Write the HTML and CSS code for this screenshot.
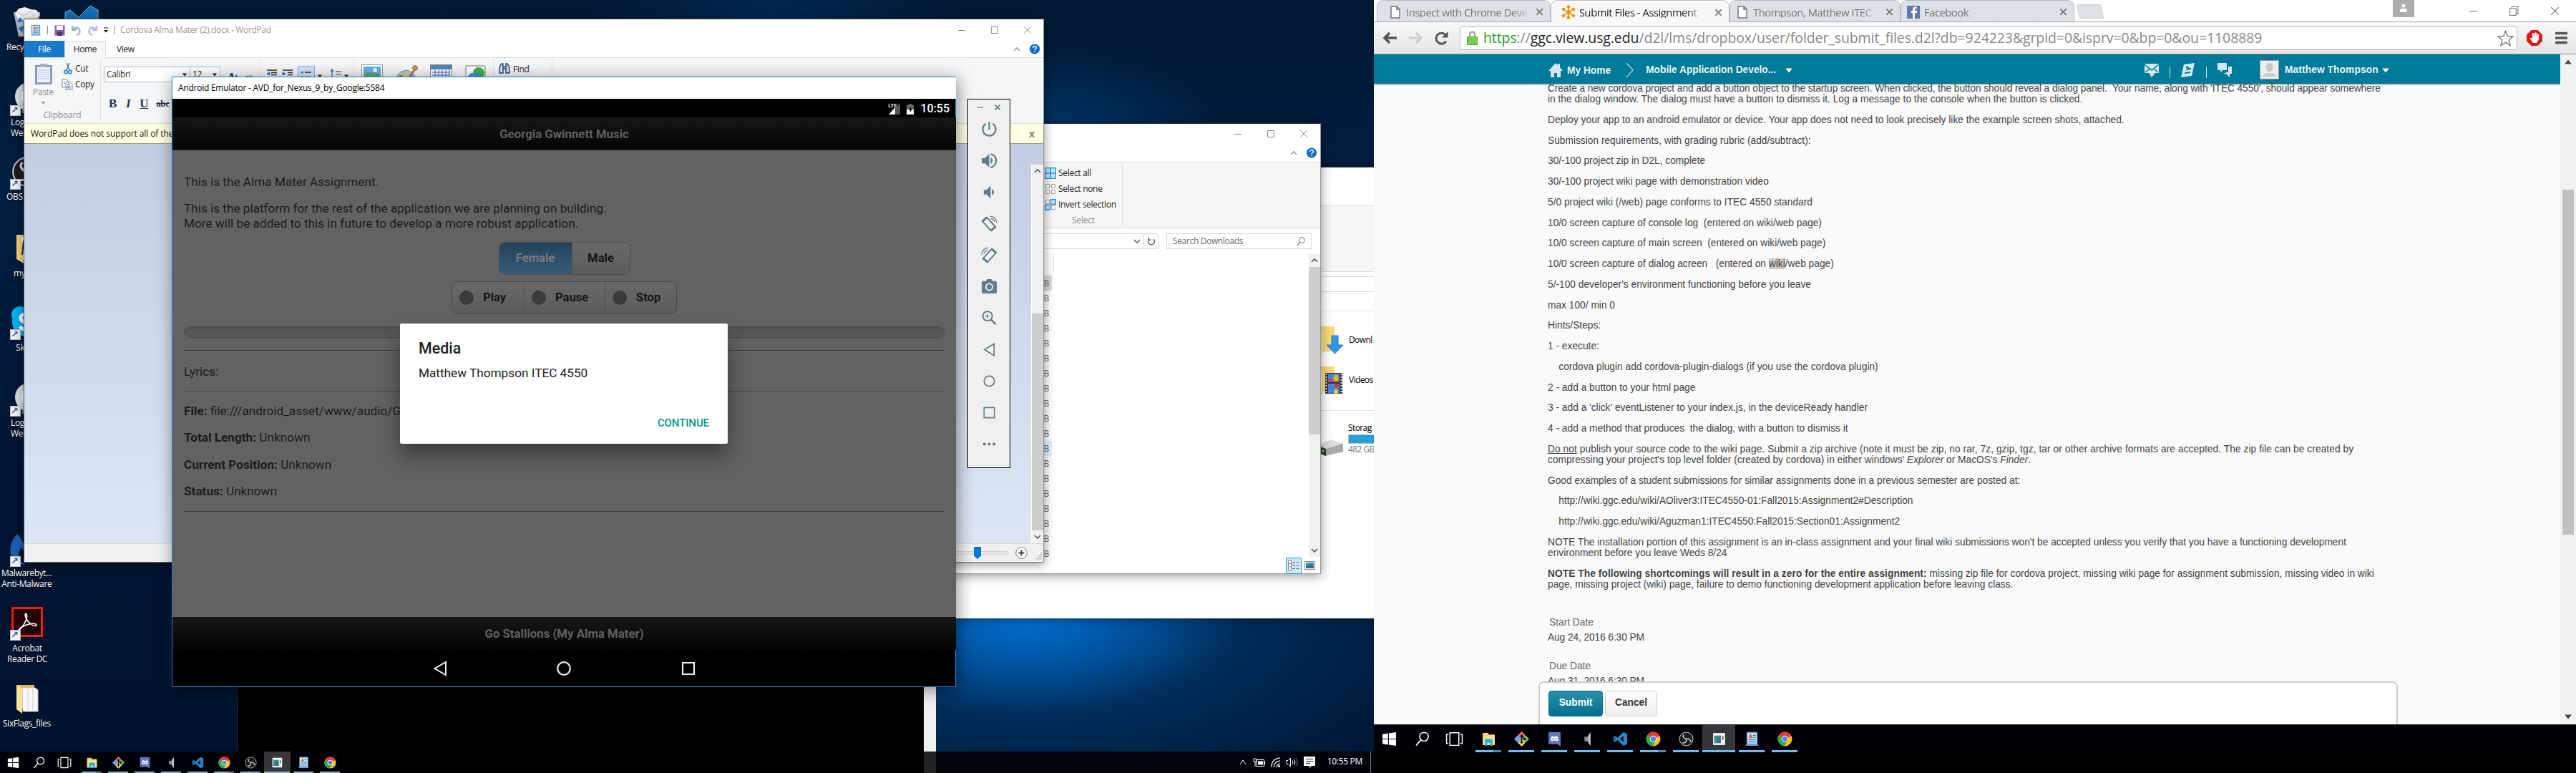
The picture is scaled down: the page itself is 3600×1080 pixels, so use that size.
FILE: index.html
```html
<!DOCTYPE html>
<html lang="en">
<head>
<meta charset="utf-8">
<title>Desktop</title>
<link rel="stylesheet" href="styles.css">
</head>
<body>
<svg class="defs" width="0" height="0">
  <symbol id="min" viewBox="0 0 12 12"><path d="M1 6.500h10" stroke="currentColor" fill="none"/></symbol>
  <symbol id="max" viewBox="0 0 12 12"><path d="M1.500 1.500h9v9h-9z" stroke="currentColor" fill="none"/></symbol>
  <symbol id="close" viewBox="0 0 12 12"><path d="M1 1l10 10M11 1L1 11" stroke="currentColor" fill="none"/></symbol>
  <symbol id="tabx" viewBox="0 0 12 12"><path d="M1.500 1.500l9 9M10.500 1.500l-9 9" stroke="currentColor" stroke-width="2" fill="none"/></symbol>
  <symbol id="up" viewBox="0 0 10 10"><path d="M1 7l4-4 4 4" stroke="currentColor" stroke-width="1.600" fill="none"/></symbol>
  <symbol id="down" viewBox="0 0 10 10"><path d="M1 3l4 4 4-4" stroke="currentColor" stroke-width="1.600" fill="none"/></symbol>
  <symbol id="caret" viewBox="0 0 10 10"><path d="M1 3h8L5 8z" fill="currentColor"/></symbol>
  <symbol id="help" viewBox="0 0 16 16"><circle cx="8" cy="8" r="7.600" fill="#0a6fd0"/><path d="M5.600 6.200c0-3.200 4.900-3 4.900-.2 0 1.700-2.300 1.800-2.300 3.700M8.200 11v1.700" stroke="#fff" stroke-width="1.600" fill="none"/></symbol>
  <symbol id="win" viewBox="0 0 20 20"><path d="M1 3.500l7.500-1v7H1zM9.500 2.300L19 1v8.500H9.500zM1 10.500h7.500v7l-7.500-1zM9.500 10.500H19V19l-9.500-1.300z" fill="#fff"/></symbol>
  <symbol id="search" viewBox="0 0 20 20"><circle cx="12.500" cy="7" r="5.800" stroke="currentColor" stroke-width="1.500" fill="none"/><path d="M8.300 11.200L2 18.500" stroke="currentColor" stroke-width="1.700"/></symbol>
  <symbol id="task" viewBox="0 0 24 20"><path d="M6 1.500h12v17H6zM4 4H1.500v12H4M20 4h2.500v12H20" stroke="#fff" stroke-width="1.400" fill="none"/></symbol>
  <symbol id="folder" viewBox="0 0 20 20"><path d="M2 2h7l1 2h8v14H2z" fill="#f7d36b"/><path d="M2 6h16v12H2z" fill="#fbe08a"/><path d="M5 19v-7q0-2 2-2h6q2 0 2 2v7h-3v-4H8v4z" fill="#22aef0"/></symbol>
  <symbol id="git" viewBox="0 0 20 20"><path d="M10 0l5 5-5 5-5-5z" fill="#f06d6d"/><path d="M5 5l5 5-5 5-5-5z" fill="#6fa5f0"/><path d="M15 5l5 5-5 5-5-5z" fill="#7bc45a"/><path d="M10 10l5 5-5 5-5-5z" fill="#f3da68"/><path d="M10 4v12M10 6l4 4" stroke="#111" stroke-width="1.300"/><circle cx="10" cy="6" r="1.500"/><circle cx="14" cy="10" r="1.500"/><circle cx="10" cy="14" r="1.500"/></symbol>
  <symbol id="discord" viewBox="0 0 20 20"><path d="M3 1h14q1 0 1 1v18l-4-3H3q-1 0-1-1V2q0-1 1-1z" fill="#6276bd"/><path d="M5 12q0-5 2-6l2 1h2l2-1q2 1 2 6l-2.500 1-1-1h-3l-1 1z" fill="#fff"/><circle cx="8" cy="10" r="1.100" fill="#6276bd"/><circle cx="12" cy="10" r="1.100" fill="#6276bd"/></symbol>
  <symbol id="spk" viewBox="0 0 20 20"><path d="M6 7h4l4-6v18l-4-6H6z" fill="#8d8d8d"/><path d="M11 6l3-5v18l-3-5z" fill="#c5c5c5"/></symbol>
  <symbol id="vs" viewBox="0 0 20 20"><path d="M14 1l5 2v14l-5 2-8-7.500L3 14l-2-1V7l2-1 3 2.500zM14 6l-4.500 4 4.500 4zM2.500 8.500v3L4 10z" fill="#2489ca" fill-rule="evenodd"/></symbol>
  <symbol id="chrome" viewBox="0 0 20 20"><circle cx="10" cy="10" r="9.500" fill="#fbc116"/><path d="M10 10L1.800 5.200A9.500 9.500 0 0 1 18.500 6z" fill="#e33b2e"/><path d="M10 10L1.800 5.200A9.500 9.500 0 0 0 9 19.500l4.500-7.500z" fill="#2da94f"/><circle cx="10" cy="10" r="4.500" fill="#fff"/><circle cx="10" cy="10" r="3.500" fill="#4688f4"/></symbol>
  <symbol id="obs" viewBox="0 0 20 20"><circle cx="10" cy="10" r="9" fill="#1d1b1e" stroke="#bbb"/><path d="M10 10c-4-1-5-4-3-6M10 10c4-1 6 1 6 4M10 10c1 4-2 6-5 5" stroke="#cfcfcf" stroke-width="1.500" fill="none"/></symbol>
  <symbol id="emu" viewBox="0 0 20 20"><path d="M2 2h16v16H2z" fill="#f3f3f3"/><path d="M3.500 5.500h9v10h-9z" fill="#3f9178"/><path d="M8 8h4v7H6z" fill="#3a6dad"/><path d="M14 6h2v5h-2z" fill="#777"/></symbol>
  <symbol id="wp" viewBox="0 0 20 20"><path d="M3 1h14v16H3z" fill="#cfe6fa" stroke="#2c6fae"/><path d="M2 17h16v2H2z" fill="#79a5cc"/><path d="M6 9l2-5 2 5M6.500 7.500h3" stroke="#e2601f" stroke-width="1.500" fill="none"/><path d="M11 5h4M11 8h4M5 11h10M5 14h10" stroke="#2e7fc6" stroke-width="1.200"/></symbol>
  <symbol id="page" viewBox="0 0 14 18"><path d="M1 1h8l4 4v12H1zM9 1v4h4" fill="#fff" stroke="#777" stroke-width="1.500"/></symbol>
  <symbol id="rot" viewBox="0 0 24 24"><path d="M8.500 3L21 16.500l-6.500 5.500L2 8.500z" fill="none" stroke="#607d8b" stroke-width="2"/><path d="M2 8.500l6.500-5.500M14.500 22l6.500-5.500" stroke="#607d8b" stroke-width="3.200"/><path d="M13 1.200q9 .3 10 10M14 4.500q4 .5 6 5" fill="none" stroke="#607d8b" stroke-width="1.300"/></symbol>
  <symbol id="logi" viewBox="0 0 44 44"><circle cx="22" cy="20" r="20" fill="#d9dcdd"/><circle cx="24" cy="20" r="13" fill="#fff"/><circle cx="26" cy="20" r="10" fill="#222"/><circle cx="27" cy="20" r="7" fill="#2e8c95"/><path d="M12 38h20v5H12z" fill="#8a8a8a"/></symbol>
</svg>

<main class="stage">
<section class="desktop">
  <div class="dicon recycle"><svg width="40" height="44" viewBox="0 0 40 44"><path d="M1 8l37 0-5 34H8z" fill="#cfd6dc" opacity=".85"/><path d="M3 10l5-7 9-2 8 3 8 1 5 7-8 8H9z" fill="#f0f0ee"/><path d="M8 9l7 4 8-6 7 6" stroke="#bbb" fill="none"/><path d="M5 22l5-7 5 6zM16 27l-3 9-6-6z" fill="#1b76cf"/></svg><p>Recy</p></div>
  <div class="dicon vstudio"><svg width="48" height="30" viewBox="0 0 48 30"><path d="M1 10l7-3 12 10L36 1l11 6v23H1z" fill="#1073b8" stroke="#8aa9c4"/></svg></div>
  <div class="dicon d-logi"><svg width="44" height="44"><use href="#logi"/></svg><p>Log<br>Wel</p></div>
  <div class="dicon d-obs"><svg width="44" height="44" viewBox="0 0 20 20"><use href="#obs"/></svg><p>OBS S</p></div>
  <div class="dicon d-my"><svg width="32" height="42" viewBox="0 0 32 42"><path d="M1 1h16v34l-6 6L1 35z" fill="#f3d27a"/><path d="M8 4h20v32H10z" fill="#fff"/><path d="M11 9l-2 20" stroke="#333" stroke-width="2"/></svg><p>my</p></div>
  <div class="dicon d-skype"><svg width="44" height="44" viewBox="0 0 44 44"><circle cx="13" cy="12" r="12" fill="#00aff0"/><circle cx="22" cy="22" r="20" fill="#00aff0"/><circle cx="31" cy="32" r="12" fill="#00aff0"/><path d="M31 14c-5-6-18-4-17 3 1 8 17 4 17 11 0 6-14 7-18 0" stroke="#fff" stroke-width="5" fill="none"/></svg><p>Sk</p></div>
  <div class="dicon d-logi2"><svg width="44" height="44"><use href="#logi"/></svg><p>Log<br>Wel</p></div>
  <div class="dicon d-mal"><svg width="44" height="44" viewBox="0 0 44 44"><path d="M10 1C-2 14-3 30 8 40c3 2 8 4 14 4-12-5-12-17-6-24 2 3 4 5 6 6C21 17 17 8 10 1z" fill="#1c5fae"/></svg><p>Malwarebyt...<br>Anti-Malware</p></div>
  <div class="dicon d-acro"><svg width="44" height="42" viewBox="0 0 44 42"><path d="M1.500 1.500h41v39h-41z" fill="#250305" stroke="#f21c0a" stroke-width="3"/><path d="M9 33c6-2 15-18 12-23-3-3-3 6 5 13 6 5 11 4 8 1-4-2-19 1-24 8-2 3 1 3 3 0" fill="none" stroke="#fff" stroke-width="1.600"/></svg><p>Acrobat<br>Reader DC</p></div>
  <div class="dicon d-six"><svg width="32" height="42" viewBox="0 0 32 42"><path d="M1 1h25v34H1z" fill="#e6b84d"/><path d="M9 5h18l4 3v30H10z" fill="#f8f8f8" stroke="#c9c9c9"/><path d="M17 7v32M24 6v32" stroke="#ccc"/><path d="M1 1l8 5v35L1 35z" fill="#fbe196"/></svg><p>SixFlags_files</p></div>

  <div class="console"><div class="console-bar"></div></div>

  <div class="pc">
    <div class="pc-top"></div><div class="pc-ribbon"></div><div class="pc-addr"><i></i></div><div class="pc-head"></div>
    <div class="pc-row r1"><svg width="34" height="42" viewBox="0 0 34 42"><path d="M0 0h20v35H0z" fill="#fbd976"/><path d="M0 4q3 0 4 5v26l-2 5H0z" fill="#f7e6ac"/><path d="M16 13h9v13h7L20.500 38 9 26h7z" fill="#2f96ea" stroke="#1c78c4"/></svg><span>Downl</span></div>
    <div class="pc-row r2"><svg width="34" height="42" viewBox="0 0 34 42"><path d="M0 0h20v35H0z" fill="#fbd976"/><path d="M0 4q3 0 4 5v26l-2 5H0z" fill="#f7e6ac"/><path d="M7 9h24v29H7z" fill="#333"/><path d="M8.500 10v28M29.500 10v28" stroke="#ddd" stroke-width="2" stroke-dasharray="2 2"/><path d="M11 10h16v12H11zM11 24h16v13H11z" fill="#4583dc"/><path d="M11 19q6-3 16 3H11z" fill="#c54867"/><ellipse cx="22" cy="16" rx="3.500" ry="4.500" fill="#e8b91d"/><ellipse cx="23" cy="27" rx="3" ry="3" fill="#d23b20"/><circle cx="22" cy="35" r="3" fill="#e8c91d"/></svg><span>Videos</span></div>
    <div class="pc-row r3"><svg width="34" height="30" viewBox="0 0 34 30"><path d="M0 8L15 1l17 6v11L7 24 0 21z" fill="#dcdcde"/><path d="M8 14l24-7v11L7 24z" fill="#a9aaac"/><path d="M0 11l8 3v10l-8-3z" fill="#333"/><circle cx="4" cy="17" r="2" fill="#38d13b"/></svg><div><span>Storag</span><b></b><em>482 GB</em></div></div>
  </div>

  <div class="explorer">
    <div class="caps"><svg><use href="#min"/></svg><svg><use href="#max"/></svg><svg><use href="#close"/></svg></div>
    <div class="tabs-r"><svg class="s10"><use href="#up"/></svg><svg class="s16"><use href="#help"/></svg></div>
    <div class="ex-ribbon">
      <div class="selbox">
        <p><svg width="16" height="16" viewBox="0 0 16 16"><path d="M.5.500h15v15H.5zM8 1v14M1 8h14" fill="#bfe3fa" stroke="#2e94e0" stroke-width="1.600"/></svg>Select all</p>
        <p><svg width="16" height="16" viewBox="0 0 16 16"><path d="M1.500 1.500h5v5h-5zM9.500 1.500h5v5h-5zM1.500 9.500h5v5h-5zM9.500 9.500h5v5h-5z" fill="#fff" stroke="#a5a5a5"/></svg>Select none</p>
        <p><svg width="16" height="16" viewBox="0 0 16 16"><path d="M1.500 1.500h5v5h-5zM9.500 9.500h5v5h-5z" fill="#fff" stroke="#a5a5a5"/><path d="M8.500.7h6.800v6.800H8.500zM.7 8.500h6.800v6.800H.7z" fill="#bfe3fa" stroke="#2e94e0" stroke-width="1.400"/></svg>Invert selection</p>
        <small>Select</small>
      </div>
    </div>
    <div class="ex-addr"><div class="abox"><svg class="s10"><use href="#down"/></svg><span><svg width="12" height="12" viewBox="0 0 12 12"><path d="M3 3a4.500 4.500 0 1 0 6 0M2 .8v3.500h3.500" stroke="#666" stroke-width="1.500" fill="none"/></svg></span></div><div class="sbox">Search Downloads<svg width="14" height="13"><use href="#search"/></svg></div></div>
    <div class="ex-body">
      <ul><li class="sel">KB</li><li>KB</li><li>KB</li><li>KB</li><li>KB</li><li>KB</li><li>KB</li><li>KB</li><li>KB</li><li>KB</li><li>KB</li><li class="hov">KB</li><li>KB</li><li>KB</li><li>KB</li><li>KB</li><li>KB</li><li>KB</li><li>KB</li></ul>
      <div class="sb"><svg class="s10"><use href="#up"/></svg><i></i><svg class="s10"><use href="#down"/></svg></div>
    </div>
    <div class="ex-foot"><span><svg width="18" height="16" viewBox="0 0 18 16"><path d="M1.500 1.500h4v13h-4zM1.500 5.500h4M1.500 10h4" fill="#fff" stroke="#888"/><path d="M7 3.500h4M12.500 3.500h4M7 8h4M12.500 8h4M7 12.500h4M12.500 12.500h4" stroke="#666"/></svg></span><svg width="15" height="12" viewBox="0 0 15 12"><path d="M.5.500h14v11H.5z" fill="#fff" stroke="#888"/><path d="M2 2h11v8H2z" fill="#3b8ad6"/><path d="M2 7l6-2 5 3v2H2z" fill="#3c6e5e"/></svg></div>
  </div>

  <div class="wordpad">
    <div class="wp-title">
      <svg width="16" height="17"><use href="#wp"/></svg><i></i>
      <svg class="save" width="15" height="15" viewBox="0 0 15 15"><path d="M.5.500h14v14H.5z" fill="#8a5fb0"/><path d="M3 1h9v6H3z" fill="#fff"/><path d="M4 9.500h7V15H4z" fill="#4b3468"/></svg>
      <svg class="undo" width="14" height="15" viewBox="0 0 14 15"><path d="M1 1v6h6M2 6c5-5 11-1 9 5q-1 2-4 3" fill="none" stroke="#a3b0cc" stroke-width="2.500"/></svg>
      <svg class="redo" width="14" height="15" viewBox="0 0 14 15"><path d="M13 1v6H7M12 6C7 1 1 5 3 11q1 2 4 3" fill="none" stroke="#b5bed3" stroke-width="2.500"/></svg>
      <svg class="qd" width="8" height="8" viewBox="0 0 8 8"><path d="M1 1h6" stroke="#111"/><path d="M1 4h6L4 7.500z" fill="#111"/></svg><i class="i2"></i>
      <span>Cordova Alma Mater (2).docx - WordPad</span>
      <div class="caps"><svg><use href="#min"/></svg><svg><use href="#max"/></svg><svg><use href="#close"/></svg></div>
    </div>
    <div class="wp-tabs"><b>File</b><span class="home">Home</span><span class="view-tab">View</span><div class="tabs-r"><svg class="s10"><use href="#up"/></svg><svg class="s16"><use href="#help"/></svg></div></div>
    <div class="wp-ribbon">
      <div class="grp clip">
        <div class="cliprow"><div class="paste"><svg width="24" height="30" viewBox="0 0 24 30"><path d="M.5 3.500h23v26H.5z" fill="#8ea1c2" stroke="#7f93b6"/><path d="M3 6h18v21H3z" fill="#eef3fb"/><path d="M4 10h16M4 13h16M4 16h16M4 19h16M4 22h16" stroke="#b7c6e2"/><path d="M7 1h10v5H7z" fill="#a9b3c6"/></svg><span>Paste</span><svg class="s7"><use href="#caret"/></svg></div>
        <div class="cc"><p><svg width="14" height="16" viewBox="0 0 14 16"><path d="M5 0l4 10M9 0L5 10" stroke="#5a6f86" stroke-width="1.300"/><circle cx="4" cy="12.500" r="2.300" fill="none" stroke="#1f84d6" stroke-width="1.600"/><circle cx="10" cy="12.500" r="2.300" fill="none" stroke="#1f84d6" stroke-width="1.600"/></svg>Cut</p><p><svg width="16" height="16" viewBox="0 0 16 16"><path d="M1 1h6l3 3v8H1zM6 4.500h6l3 3v8H6z" fill="#fff" stroke="#7c8796"/><path d="M8 8h4M8 10.500h5M8 13h5M3 4h2M3 6.500h2" stroke="#5d8fc9"/></svg>Copy</p></div></div>
        <small>Clipboard</small>
      </div>
      <div class="grp font"><div class="frow"><span class="combo c1">Calibri<svg class="s8"><use href="#caret"/></svg></span><span class="combo c2">12<svg class="s8"><use href="#caret"/></svg></span><span class="ga">A<sup>▴</sup></span><span class="ga sm">A<sup>▾</sup></span></div><div class="biu"><b>B</b><em>I</em><u>U</u><s>abc</s></div></div>
      <div class="grp para">
        <svg width="16" height="16" viewBox="0 0 16 16"><path d="M1 2h14M7 5.500h8M7 8.500h8M1 12h14M7 15h8" stroke="#333" stroke-width="1.500"/><path d="M5 5v4L1 7z" stroke="#1f6fc4" fill="#1f6fc4"/></svg>
        <svg width="16" height="16" viewBox="0 0 16 16"><path d="M1 2h14M8 5.500h7M8 8.500h7M1 12h14M7 15h8" stroke="#333" stroke-width="1.500"/><path d="M1 5v4l4-2z" stroke="#1f6fc4" fill="#1f6fc4"/></svg>
        <span class="bul"><svg width="14" height="14" viewBox="0 0 14 14"><path d="M0 3h2.500M0 9.500h2.500" stroke="#1f6fc4" stroke-width="2.500"/><path d="M5 3h9M5 9.500h9" stroke="#333" stroke-width="1.500"/></svg></span>
        <svg class="s8"><use href="#caret"/></svg>
        <svg class="ls" width="16" height="15" viewBox="0 0 16 15"><path d="M3 1v12M1 4l2-3 2 3" stroke="#1f6fc4" stroke-width="1.300" fill="none"/><path d="M8 4h8M8 8h8M8 12h8" stroke="#333"/></svg><svg class="s8"><use href="#caret"/></svg>
      </div>
      <div class="grp ins">
        <svg width="30" height="26" viewBox="0 0 30 26"><path d="M.5.500h29v25H.5z" fill="#fff" stroke="#999"/><path d="M3 3h24v20H3z" fill="#5fb5e8"/><path d="M3 14q8-6 24 0v9H3z" fill="#62a36d"/><circle cx="19" cy="8" r="3" fill="#e9f6fd"/></svg>
        <svg width="32" height="28" viewBox="0 0 32 28"><path d="M1 28Q0 10 16 8q15 2 13 20z" fill="#a8cbe8" stroke="#6f9fc7"/><circle cx="8" cy="18" r="3" fill="#e3493a"/><circle cx="15" cy="13" r="3" fill="#f2c94c"/><circle cx="22" cy="18" r="3" fill="#46a24e"/><path d="M30 3L18 22" stroke="#b5793f" stroke-width="3"/><circle cx="28" cy="5" r="4" fill="#c98849"/></svg>
        <svg width="31" height="26" viewBox="0 0 31 26"><path d="M.5.500h30v26H.5z" fill="#fff" stroke="#888"/><path d="M1 1h29v6H1z" fill="#5580bb"/><path d="M3 11h25M3 15h25M3 19h25M7 8v18M12 8v18M17 8v18M22 8v18M27 8v18" stroke="#6f9bd4" stroke-width="1.500"/><circle cx="21" cy="25" r="6" fill="#d5dade" stroke="#777"/></svg>
        <svg width="31" height="28" viewBox="0 0 31 28"><path d="M2 2h27v27H2z" fill="#fff" stroke="#777"/><circle cx="20" cy="12" r="8" fill="#3eb349"/><path d="M5 16l4-4h11v9l-3 6H5z" fill="#4b92df"/></svg>
      </div>
      <div class="grp edit"><svg width="16" height="15" viewBox="0 0 16 15"><path d="M2 4l2-3h2v13H1V8zM14 4l-2-3h-2v13h5V8zM6 5h4v3H6z" fill="#cfdcf2" stroke="#2c4272" stroke-width="1.400"/></svg>Find</div>
    </div>
    <div class="wp-warn"><span>WordPad does not support all of the features</span><b>x</b></div>
    <div class="wp-doc"><div class="sb"><svg class="s10"><use href="#up"/></svg><i></i><svg class="s10"><use href="#down"/></svg></div></div>
    <div class="wp-stat"><div class="track"><i></i></div><svg width="17" height="17" viewBox="0 0 17 17"><circle cx="8.500" cy="8.500" r="7.800" fill="#fff" stroke="#777"/><path d="M8.500 4.500v8M4.500 8.500h8" stroke="#444" stroke-width="2"/></svg><svg class="grip" width="9" height="9" viewBox="0 0 9 9"><path d="M6 1h2M3 4h2M6 4h2M0 7.500h2M3 7.500h2M6 7.500h2" stroke="#bbb" stroke-width="2"/></svg></div>
  </div>

  <div class="emu">
    <div class="emu-title">Android Emulator - AVD_for_Nexus_9_by_Google:5584</div>
    <div class="emu-status"><svg width="20" height="16" viewBox="0 0 20 16"><path d="M20 0v16H4z" fill="#555"/><path d="M13 6v10H4z" fill="#fff"/></svg><small>LTE</small><svg width="10" height="15" viewBox="0 0 10 15"><path d="M3 0h4v1.500h3V8H0V1.500h3z" fill="#666"/><path d="M0 8h10v7H0z" fill="#fff"/><path d="M6 4L3 9h2v3l3-5H6z" fill="#000"/></svg><span>10:55</span></div>
    <div class="bar head">Georgia Gwinnett Music</div>
    <div class="emu-body">
      <p class="p1">This is the Alma Mater Assignment.</p>
      <p class="p2">This is the platform for the rest of the application we are planning on building.<br>More will be added to this in future to develop a more robust application.</p>
      <div class="seg g1"><span class="on">Female</span><span>Male</span></div>
      <div class="seg g2"><span><i></i>Play</span><span><i></i>Pause</span><span><i></i>Stop</span></div>
      <div class="prog"></div>
      <hr>
      <p class="ly">Lyrics:</p>
      <hr>
      <div class="info"><p><b>File:</b> file:///android_asset/www/audio/G</p><p><b>Total Length:</b> Unknown</p><p><b>Current Position:</b> Unknown</p><p><b>Status:</b> Unknown</p></div>
      <hr>
    </div>
    <div class="bar foot">Go Stallions (My Alma Mater)</div>
    <div class="emu-nav"><svg width="20" height="22" viewBox="0 0 20 22"><path d="M18 2v18L2.500 11z" fill="none" stroke="#eee" stroke-width="2"/></svg><svg width="22" height="22" viewBox="0 0 22 22"><circle cx="11" cy="11" r="8.800" fill="none" stroke="#eee" stroke-width="2.200"/></svg><svg width="22" height="22" viewBox="0 0 22 22"><path d="M3 3h16v16H3z" fill="none" stroke="#eee" stroke-width="2.200"/></svg></div>
    <div class="dialog"><h2>Media</h2><p>Matthew Thompson ITEC 4550</p><b>CONTINUE</b></div>
  </div>

  <div class="tools">
    <div class="tc"><svg width="8" height="8" viewBox="0 0 8 8"><path d="M0 4h8" stroke="#8aa0ab" stroke-width="2"/></svg><svg width="8" height="8" viewBox="0 0 8 8"><path d="M.5.500l7 7M7.500.500l-7 7" stroke="#607d8b" stroke-width="1.600"/></svg></div>
    <svg viewBox="0 0 24 24"><path d="M12 1v12M7 4a9.500 9.500 0 1 0 10 0" fill="none" stroke="#607d8b" stroke-width="2.300"/></svg>
    <svg viewBox="0 0 24 24"><path d="M1 8h5l6-6v20l-6-6H1z" fill="#607d8b"/><path d="M14 7v10q3-2 3-5t-3-5z" fill="#607d8b"/><path d="M14 2q8 2 8 10t-8 10" fill="none" stroke="#607d8b" stroke-width="2.200"/></svg>
    <svg viewBox="0 0 24 24"><path d="M4 8.500h4l6-6v19l-6-6H4z" fill="#607d8b"/><path d="M16 7v10q3-2 3-5t-3-5z" fill="#607d8b"/></svg>
    <svg viewBox="0 0 24 24"><use href="#rot"/></svg>
    <svg viewBox="0 0 24 24"><g transform="matrix(-1 0 0 1 24 0)"><use href="#rot"/></g></svg>
    <svg viewBox="0 0 24 24"><path d="M3 4h4l2-3h6l2 3h4q2 0 2 2v14q0 2-2 2H3q-2 0-2-2V6q0-2 2-2z" fill="#607d8b"/><circle cx="12" cy="12.500" r="4.800" fill="none" stroke="#eee" stroke-width="2"/></svg>
    <svg viewBox="0 0 24 24"><circle cx="9.500" cy="9" r="6.800" fill="none" stroke="#607d8b" stroke-width="2"/><path d="M14.500 14l7 7" stroke="#607d8b" stroke-width="2.700"/><path d="M9.500 6v6M6.500 9h6" stroke="#607d8b" stroke-width="1.400"/></svg>
    <svg viewBox="0 0 24 24"><path d="M19 3.500v17L5 12z" fill="none" stroke="#607d8b" stroke-width="1.800"/></svg>
    <svg viewBox="0 0 24 24"><circle cx="12" cy="12" r="7.500" fill="none" stroke="#607d8b" stroke-width="1.800"/></svg>
    <svg viewBox="0 0 24 24"><path d="M4.500 4.500h15v15h-15z" fill="none" stroke="#607d8b" stroke-width="1.800"/></svg>
    <svg viewBox="0 0 24 24"><g fill="#607d8b"><circle cx="5" cy="12" r="2.200"/><circle cx="12" cy="12" r="2.200"/><circle cx="19" cy="12" r="2.200"/></g></svg>
  </div>

  <footer class="taskbar tb1">
    <div class="sys"><svg><use href="#win"/></svg></div><div class="sys"><svg class="w"><use href="#search"/></svg></div><div class="sys"><svg><use href="#task"/></svg></div>
    <div class="app multi"><svg><use href="#folder"/></svg></div><div class="app"><svg><use href="#git"/></svg></div><div class="app"><svg><use href="#discord"/></svg></div><div class="app"><svg><use href="#spk"/></svg></div><div class="app"><svg><use href="#vs"/></svg></div><div class="app multi"><svg><use href="#chrome"/></svg></div><div class="app"><svg><use href="#obs"/></svg></div><div class="app act"><svg><use href="#emu"/></svg></div><div class="app"><svg><use href="#wp"/></svg></div><div class="app"><svg><use href="#chrome"/></svg></div>
    <div class="tray">
      <svg width="12" height="10" viewBox="0 0 10 10"><path d="M1 8l4-6 4 6" stroke="#fff" fill="none"/></svg>
      <svg width="17" height="13" viewBox="0 0 17 13"><path d="M5 2.500h10.500v9H5zM1 1h4v4H1zM3 5v7" stroke="#fff" fill="none"/><path d="M7 4.500h7v5H7zM15.500 5h1.500v4h-1.500z" fill="#fff"/></svg>
      <svg width="13" height="14" viewBox="0 0 13 14"><path d="M1 14Q1 2 13 1M4.500 14q0-8 8.500-9M8 14q0-4 5-5" stroke="#ddd" stroke-width="1.300" fill="none"/><circle cx="11.500" cy="12.500" r="1.500" fill="#fff"/></svg>
      <svg width="17" height="14" viewBox="0 0 17 14"><path d="M1 4.500h2L6.500 1v12L3 9.500H1zM9 4.500q2 2.500 0 5M11.500 3q3 4 0 8" stroke="#fff" fill="none"/><path d="M14 1.500q4 5.500 0 11" stroke="#777" fill="none"/></svg>
      <svg width="16" height="16" viewBox="0 0 16 16"><path d="M0 0h16v13h-5l-3 3v-3H0z" fill="#fff"/><path d="M3 3.500h10M3 6.500h10M3 9.500h6" stroke="#111"/></svg>
      <span>10:55 PM</span><i></i>
    </div>
  </footer>
</section>

<section class="screen2">
  <div class="tabstrip">
    <div class="tab t1"><svg class="fv" width="14" height="18"><use href="#page"/></svg><span>Inspect with Chrome Deve</span><svg class="x"><use href="#tabx"/></svg></div>
    <div class="tab t2 cur"><svg class="fv" width="20" height="20" viewBox="0 0 20 20"><path d="M10 10V2M10 10l7-4M10 10l7 5M10 10v8M10 10l-7 5M10 10L3 6" stroke="#f5a11a" stroke-width="2"/><g fill="#f0930f"><circle cx="10" cy="10" r="3"/><circle cx="10" cy="2.500" r="2.300"/><circle cx="17" cy="6" r="2.300"/><circle cx="17" cy="15" r="2.300"/><circle cx="10" cy="17.500" r="2.300"/><circle cx="3" cy="15" r="2.300"/><circle cx="3" cy="6" r="2.300"/></g></svg><span>Submit Files - Assignment</span><svg class="x"><use href="#tabx"/></svg></div>
    <div class="tab t3"><svg class="fv" width="14" height="18"><use href="#page"/></svg><span>Thompson, Matthew ITEC</span><svg class="x"><use href="#tabx"/></svg></div>
    <div class="tab t4"><svg class="fv" width="18" height="18" viewBox="0 0 18 18"><path d="M0 0h18v18H0z" fill="#6275ad"/><path d="M11 18v-8h3V7h-3V5.500q0-1.500 1.500-1.500H14V1.500h-2.500Q8 1.500 8 5v2H6v3h2v8z" fill="#fff"/></svg><span>Facebook</span><svg class="x"><use href="#tabx"/></svg></div>
    <div class="newtab"></div>
    <div class="user"><svg width="12" height="12" viewBox="0 0 12 12"><circle cx="6" cy="3" r="2.500" fill="#fff"/><path d="M1 12V9q0-2 2-2h6q2 0 2 2v3z" fill="#fff"/></svg></div>
    <div class="ccaps"><svg><use href="#min"/></svg><svg viewBox="0 0 12 12"><path d="M.5 2.500h8v9h-8zM3 2.500V.5h8v9H8.500" stroke="currentColor" fill="none"/></svg><svg><use href="#close"/></svg></div>
  </div>
  <div class="toolbar">
    <svg width="21" height="18" viewBox="0 0 21 18"><path d="M20 9H4M10 2L3 9l7 7" stroke="#555" stroke-width="3.400" fill="none"/></svg>
    <svg width="21" height="18" viewBox="0 0 21 18"><path d="M1 9h16M11 2l7 7-7 7" stroke="#ccc" stroke-width="3.200" fill="none"/></svg>
    <svg width="21" height="19" viewBox="0 0 21 19"><path d="M17 13.500a7.500 7.500 0 1 1-1-9" stroke="#555" stroke-width="3" fill="none"/><path d="M19.500 0v8.500H11z" fill="#555"/></svg>
    <div class="omni"><svg width="15" height="20" viewBox="0 0 15 20"><path d="M4 9V5q0-3.500 3.500-3.500T11 5v4" fill="none" stroke="#999" stroke-width="2"/><path d="M.5 8.500h14v11H.5z" fill="#7ccb54" stroke="#5aa53a"/></svg><p><b>https</b>://<em>ggc.view.usg.edu</em>/d2l/lms/dropbox/user/folder_submit_files.d2l?db=924223&amp;grpid=0&amp;isprv=0&amp;bp=0&amp;ou=1108889</p><svg width="23" height="23" viewBox="0 0 23 23"><path d="M11.500 1.500l3 7 7.500.5-5.800 4.800 1.900 7.700-6.600-4.200-6.600 4.200 1.900-7.700L1 9l7.500-.5z" fill="#fff" stroke="#777" stroke-width="1.400"/></svg></div>
    <svg class="abp" width="22" height="22" viewBox="0 0 22 22"><path d="M6.500 0h9L22 6.500v9L15.500 22h-9L0 15.500v-9z" fill="#e11b22"/><path d="M8 4v8L5.500 10.500 5 12l4 6h5l3-5V6h-1.500v5L15 4h-1.500v7L13 3.500h-1.700V11L10 4z" fill="#fff"/></svg>
    <svg width="17" height="18" viewBox="0 0 17 18"><path d="M1.500 2.500h14M1.500 9h14M1.500 15.500h14" stroke="#555" stroke-width="3.600" stroke-linecap="round"/></svg>
  </div>
  <div class="view">
    <div class="page">
      <div class="d2l">
        <svg width="20" height="20" viewBox="0 0 20 20"><path d="M10 0l3 3V1h3v5l4 5h-3v9h-5v-6H8v6H3v-9H0z" fill="#d3e8ee"/></svg><b class="h1">My Home</b>
        <svg class="chev" width="12" height="22" viewBox="0 0 12 22"><path d="M1 1l9 10-9 10" stroke="#a7d0dc" stroke-width="1.300" fill="none"/></svg><b class="h2">Mobile Application Develo...</b><svg class="s12"><use href="#caret"/></svg>
        <div class="me">
          <svg width="20" height="20" viewBox="0 0 20 20"><path d="M0 1h20v13h-5l-5 6-4-6H0z" fill="#d3e8ee"/><path d="M0 2l10 8 10-8M1 13l6-5M19 13l-6-5" stroke="#007a98" stroke-width="1.600" fill="none"/></svg><i></i>
          <svg width="20" height="20" viewBox="0 0 20 20"><path d="M4 2l15-2-4 18-15 2z" fill="#d3e8ee"/><path d="M7 5l4 2M7 9l7-1M5 14l8-1" stroke="#007a98" stroke-width="2"/></svg><i></i>
          <svg width="20" height="20" viewBox="0 0 20 20"><path d="M0 0h13v10H7l-3 4v-4H0zM15 5h5v10h-3v5l-5-5H8l7-3z" fill="#d3e8ee"/></svg>
          <span class="av"><svg width="23" height="23" viewBox="0 0 23 23"><ellipse cx="11.500" cy="8" rx="5" ry="6" fill="#c9c9c9"/><path d="M2 21q1-5 9.500-5t9.500 5z" fill="#c9c9c9"/></svg></span><b>Matthew Thompson</b><svg class="s12"><use href="#caret"/></svg>
        </div>
      </div>
      <article>
        <p><span class="tight">Create a new cordova project and add a button object to the startup screen. When clicked, the button should reveal a dialog panel.&nbsp; Your name, along with 'ITEC 4550', should appear somewhere</span><br>in the dialog window. The dialog must have a button to dismiss it. Log a message to the console when the button is clicked.</p>
        <p>Deploy your app to an android emulator or device. Your app does not need to look precisely like the example screen shots, attached.</p>
        <p>Submission requirements, with grading rubric (add/subtract):</p>
        <p>30/-100 project zip in D2L, complete</p>
        <p>30/-100 project wiki page with demonstration video</p>
        <p>5/0 project wiki (/web) page conforms to ITEC 4550 standard</p>
        <p>10/0 screen capture of console log&nbsp; (entered on wiki/web page)</p>
        <p>10/0 screen capture of main screen&nbsp; (entered on wiki/web page)</p>
        <p>10/0 screen capture of dialog acreen&nbsp;&nbsp; (entered on <mark>wiki</mark>/web page)</p>
        <p>5/-100 developer's environment functioning before you leave</p>
        <p>max 100/ min 0</p>
        <p>Hints/Steps:</p>
        <p>1 - execute:</p>
        <p>&nbsp;&nbsp;&nbsp; cordova plugin add cordova-plugin-dialogs (if you use the cordova plugin)</p>
        <p>2 - add a button to your html page</p>
        <p>3 - add a 'click' eventListener to your index.js, in the deviceReady handler</p>
        <p>4 - add a method that produces&nbsp; the dialog, with a button to dismiss it</p>
        <p><span class="loose"><u>Do not</u> publish your source code to the wiki page. Submit a zip archive (note it must be zip, no rar, 7z, gzip, tgz, tar or other archive formats are accepted. The zip file can be created by</span><br>compressing your project's top level folder (created by cordova) in either windows' <em>Explorer</em> or MacOS's <em>Finder</em>.</p>
        <p>Good examples of a student submissions for similar assignments done in a previous semester are posted at:</p>
        <p>&nbsp;&nbsp;&nbsp; http://wiki.ggc.edu/wiki/AOliver3:ITEC4550-01:Fall2015:Assignment2#Description</p>
        <p>&nbsp;&nbsp;&nbsp; http://wiki.ggc.edu/wiki/Aguzman1:ITEC4550:Fall2015:Section01:Assignment2</p>
        <p>NOTE The installation portion of this assignment is an in-class assignment and your final wiki submissions won't be accepted unless you verify that you have a functioning development<br>environment before you leave Weds 8/24</p>
        <p><b>NOTE The following shortcomings will result in a zero for the entire assignment:</b> missing zip file for cordova project, missing wiki page for assignment submission, missing video in wiki<br>page, missing project (wiki) page, failure to demo functioning development application before leaving class.</p>
        <dl><dt>Start Date</dt><dd>Aug 24, 2016 6:30 PM</dd><dt>Due Date</dt><dd>Aug 31, 2016 6:30 PM</dd></dl>
      </article>
      <div class="actions"><b class="submit">Submit</b><b class="cancel">Cancel</b></div>
    </div>
    <div class="vsb"><svg class="s12"><use href="#caret"/></svg><i></i><svg class="s12 dn"><use href="#caret"/></svg></div>
  </div>
  <footer class="taskbar tb2">
    <div class="sys"><svg><use href="#win"/></svg></div><div class="sys"><svg class="w"><use href="#search"/></svg></div><div class="sys"><svg><use href="#task"/></svg></div>
    <div class="app multi"><svg><use href="#folder"/></svg></div><div class="app"><svg><use href="#git"/></svg></div><div class="app"><svg><use href="#discord"/></svg></div><div class="app"><svg><use href="#spk"/></svg></div><div class="app"><svg><use href="#vs"/></svg></div><div class="app multi"><svg><use href="#chrome"/></svg></div><div class="app"><svg><use href="#obs"/></svg></div><div class="app act"><svg><use href="#emu"/></svg></div><div class="app"><svg><use href="#wp"/></svg></div><div class="app"><svg><use href="#chrome"/></svg></div>
  </footer>
</section>
</main>
</body>
</html>
```
FILE: styles.css
```css
* { box-sizing: border-box; margin: 0; padding: 0; }
html, body { width: 3600px; height: 1080px; overflow: hidden; background: #000; }
body { font: 12px/16px "Open Sans", "Noto Sans", sans-serif; color: #222; }
svg { display: block; flex: none; }
ul { list-style: none; }
.defs { position: absolute; }
.stage { display: grid; grid-template-columns: 1920px 1680px; height: 1080px; }
.s7 { width: 7px; height: 7px; } .s8 { width: 8px; height: 8px; } .s10 { width: 10px; height: 10px; }
.s12 { width: 12px; height: 12px; } .s16 { width: 16px; height: 15px; }

/* Desktop */
.desktop { position: relative; overflow: hidden; letter-spacing: -.35px;
  background:
    radial-gradient(ellipse 300px 140px at 1430px 860px, #006fd0 0, rgba(0,100,190,.75) 40%, transparent 100%),
    radial-gradient(ellipse 650px 320px at 1450px 860px, rgba(0,84,155,.7), transparent 100%),
    radial-gradient(ellipse 220px 110px at 1480px 175px, rgba(0,70,130,.55), transparent 100%),
    radial-gradient(ellipse 260px 120px at 1080px 20px, rgba(0,50,100,.6), transparent 100%),
    linear-gradient(#001833, #001f42 25%, #001433 60%, #00132d); }
.dicon { position: absolute; display: flex; flex-direction: column; color: #fff; line-height: 15px; text-shadow: 0 1px 2px #000; white-space: nowrap; }
.recycle { left: 18px; top: 9px; } .recycle p { margin: 5px 0 0 -9px; }
.vstudio { left: 90px; top: 7px; }
.d-logi { left: 19px; top: 115px; } .d-obs { left: 16px; top: 218px; } .d-my { left: 22px; top: 327px; }
.d-skype { left: 15px; top: 428px; } .d-logi2 { left: 19px; top: 535px; } .d-mal { left: 14px; top: 745px; }
.d-acro { left: 16px; top: 848px; } .d-six { left: 22px; top: 956px; }
.d-logi p, .d-logi2 p { margin: 4px 0 0 -4px; }
.d-obs p { margin: 5px 0 0 -7px; } .d-my p { margin: 5px 0 0 -3px; } .d-skype p { margin: 6px 0 0 7px; }
.d-mal p { margin: 4px 0 0 -12px; text-align: center; } .d-acro p { margin: 8px 0 0 -6px; text-align: center; width: 56px; }
.d-six p { margin: 5px 0 0 -18px; }
.d-logi::after, .d-logi2::after, .d-obs::after, .d-skype::after, .d-mal::after, .d-acro::after {
  content: "↗"; position: absolute; left: 0; top: 32px; width: 13px; height: 13px; background: #f2f2f2; color: #2b5fa8;
  font: bold 13px/11px "DejaVu Sans", sans-serif; text-shadow: none; border: 1px solid #bbb; letter-spacing: 0; }
.d-logi::after, .d-logi2::after { left: -5px; } .d-obs::after { left: -2px; } .d-acro::after { left: -2px; } .d-skype::after { left: -1px; }

.console { position: absolute; left: 331px; top: 930px; width: 977px; height: 150px; background: #000; display: flex; justify-content: flex-end; border-left: 1px solid #333; }
.console-bar { width: 17px; background: #f0f0f0; }

.caps { display: flex; gap: 34px; color: #888; align-items: center; }
.caps svg { width: 12px; height: 12px; }
.tabs-r { display: flex; align-items: center; gap: 12px; justify-content: flex-end; color: #999; padding-right: 4px; }

/* Computer window */
.pc { position: absolute; left: 1300px; top: 233px; width: 700px; height: 631px; background: #fff; padding-left: 545px; display: flex; flex-direction: column; border-top: 1px solid #334; box-shadow: 0 0 14px rgba(0,0,0,.5); }
.pc-top { height: 53px; } .pc-ribbon { height: 93px; background: #f5f6f7; border: 1px solid #d9dadb; border-width: 1px 0; }
.pc-addr { height: 29px; padding-top: 6px; } .pc-addr i { display: block; height: 22px; border: 1px solid #d9d9d9; border-width: 1px 0; }
.pc-head { height: 26px; border-bottom: 1px solid #e2e2e2; }
.pc-row { display: flex; gap: 6px; color: #000; }
.pc-row svg { margin-top: 21px; } .pc-row span { margin-top: 32px; }
.pc-row span, .pc-row em { letter-spacing: -.6px; }
.r1 { height: 56px; } .r2 { height: 83px; border-bottom: 1px solid #e2e2e2; }
.r3 svg { margin-top: 39px; } .r3 div { display: flex; flex-direction: column; margin-left: -1px; } .r3 span { margin-top: 16px; }
.r3 b { width: 100px; height: 13px; background: #26a0da; border: 1px solid #bbb; margin-top: 1px; } .r3 em { font-style: normal; color: #777; }

/* Downloads window */
.explorer { position: absolute; left: 1200px; top: 172px; width: 646px; height: 630px; background: #fff; border: 1px solid #999; border-top-color: #223; box-shadow: 0 2px 14px rgba(0,0,0,.45); display: grid; grid-template-rows: 28px 25px 93px 36px 423px 24px; }
.explorer .caps { justify-content: flex-end; padding-right: 17px; }
.ex-ribbon { background: #f5f6f7; border: 1px solid #d9dadb; border-width: 1px 0; padding: 3px 0 3px 259px; }
.selbox { width: 109px; height: 86px; border-right: 1px solid #dcdddd; display: flex; flex-direction: column; letter-spacing: -.3px; }
.selbox p { display: flex; gap: 3px; height: 22px; align-items: center; padding-top: 3px; white-space: nowrap; } .selbox small { text-align: center; font-size: 12px; color: #8a8a8a; margin-top: 5px; }
.ex-addr { display: flex; padding-top: 7px; gap: 11px; }
.abox { width: 418px; height: 22px; border: 1px solid #d9d9d9; display: flex; justify-content: flex-end; align-items: center; gap: 4px; color: #666; }
.abox span { width: 20px; height: 20px; border-left: 1px solid #d9d9d9; display: grid; place-items: center; }
.sbox { width: 203px; height: 22px; border: 1px solid #d9d9d9; padding: 0 7px 0 8px; display: flex; align-items: center; justify-content: space-between; color: #6d6d6d; }
.ex-body { display: flex; justify-content: space-between; }
.ex-body ul { width: 273px; padding-top: 30px; background: linear-gradient(#e5e5e5, #e5e5e5) 271px 0 / 1px 25px no-repeat; }
.ex-body li { width: 269px; height: 21px; padding-right: 4px; text-align: right; line-height: 22px; color: #6d6d6d; }
.sel { background: #d9d9d9; } .hov { background: #e5f3ff; }
.sb { width: 16px; background: #f0f0f0; color: #555; display: flex; flex-direction: column; align-items: center; }
.sb svg { margin: 4px 0; } .sb i { width: 100%; background: #cdcdcd; }
.explorer .sb i { height: 234px; } .explorer .sb svg:last-child { margin-top: auto; }
.ex-foot { display: flex; justify-content: flex-end; align-items: center; gap: 4px; padding-right: 7px; }
.ex-foot span { width: 22px; height: 23px; border: 1px solid #26a0da; background: #cde8f6; display: grid; place-items: center; }

/* WordPad */
.wordpad { position: absolute; left: 33px; top: 26px; width: 1426px; height: 760px; border: 1px solid #444c58; border-right-color: #999; border-bottom-color: #777; background: #fff; box-shadow: 0 2px 14px rgba(0,0,0,.45); display: grid; grid-template-rows: 30px 24px 92px 28px 558px 26px; }
.wp-title { display: flex; align-items: center; padding: 0 16px 0 8px; color: #999; }
.wp-title i { width: 1px; height: 12px; background: #888; margin-left: 8px; }
.save { margin-left: 9px; } .undo { margin-left: 9px; } .redo { margin-left: 8px; } .qd { margin-left: 8px; }
.wp-title .i2 { margin: 0 7px 0 8px; }
.wp-title .caps { margin-left: auto; }
.wp-tabs { display: flex; line-height: 23px; border-bottom: 1px solid #dadbdc; }
.wp-tabs b { width: 56px; background: #1979ca; color: #fff; font-weight: 400; text-align: center; }
.home { width: 58px; height: 24px; text-align: center; border: 1px solid #dadbdc; border-bottom: 0; background: #f5f6f7; line-height: 22px; }
.view-tab { margin-left: 15px; } .wp-tabs .tabs-r { margin-left: auto; }
.wp-ribbon { background: #f5f6f7; display: flex; padding-top: 2px; border-bottom: 1px solid #dadbdc; }
.grp { height: 86px; border-right: 1px solid #e0e1e2; }
.clip { width: 107px; } .cliprow { display: flex; height: 68px; }
.paste { width: 53px; padding: 5px 0 0 0; display: flex; flex-direction: column; align-items: center; color: #8d8d8d; gap: 3px; } .paste span { margin-top: 0; }
.cc p { display: flex; gap: 3px; align-items: center; height: 22px; } .cc { padding-top: 2px; margin-left: -1px; } .cc p:first-child { padding-left: 2px; }
.clip small { display: block; font-size: 12px; color: #8d8d8d; text-align: center; margin-top: 2px; letter-spacing: -.2px; }
.font { width: 223px; padding: 10px 0 0 4px; } .frow { display: flex; }
.combo { border: 1px solid #abbdd8; height: 22px; background: #fff; display: flex; justify-content: space-between; align-items: center; padding: 0 3px; }
.c1 { width: 121px; } .c2 { width: 43px; margin-left: -1px; }
.ga { font: bold 18px/26px "Liberation Serif", serif; color: #334765; margin-left: 9px; } .ga sup { color: #1f84d6; font-size: 8px; margin-left: -2px; } .ga.sm { font-size: 14px; line-height: 30px; }
.biu { display: flex; font: 17px/20px "Liberation Serif", serif; color: #1f3350; padding: 8px 0 0 7px; gap: 13px; } .biu em, .biu u { font-weight: bold; } .biu s { font-size: 13px; font-weight: bold; margin-left: -2px; }
.para { width: 131px; display: flex; padding: 13px 0 0 8px; gap: 6px; color: #333; }
.bul { width: 24px; height: 26px; margin-top: -4px; border: 1px solid #86b3e0; background: #cfe3f7; padding: 5px 4px; }
.para .s8 { margin: 6px 0 0 -3px; } .ls { margin: 0 0 0 4px; }
.ins { width: 195px; display: flex; gap: 17px; padding: 7px 0 0 10px; }
.edit { width: 82px; display: flex; gap: 4px; padding: 5px 0 0 7px; line-height: 17px; }
.wp-warn { background: #ffffe1; border-bottom: 1px solid #9d9d94; display: flex; justify-content: space-between; line-height: 28px; padding: 0 12px 0 9px; color: #111; letter-spacing: -.1px; } .wp-warn b { color: #888; font-size: 14px; }
.wp-doc { background: linear-gradient(#c4cde0, #dce6f4); display: flex; justify-content: flex-end; padding-top: 29px; }
.wp-doc .sb { width: 17px; border-left: 1px solid #fff; }
.wp-doc .sb i { margin-top: 190px; height: 303px; }
.wp-stat { background: #f0f0f0; border-top: 1px solid #d7d7d7; display: flex; align-items: center; justify-content: flex-end; gap: 11px; }
.track { width: 200px; height: 5px; border: 1px solid #d6d6d6; background: #e7eaea; display: flex; align-items: center; justify-content: flex-end; }
.track i { width: 10px; height: 17px; flex: none; background: #0078d7; margin-right: 36px; clip-path: polygon(0 0,100% 0,100% 75%,50% 100%,0 75%); }
.grip { align-self: flex-end; margin: 0 1px 3px 1px; }

/* Emulator */
.emu { position: absolute; left: 240px; top: 107px; width: 1096px; height: 853px; border: 1px solid #1883d7; background: #000; box-shadow: 2px 4px 22px rgba(0,0,0,.45); display: grid; grid-template-rows: 30px 26px 46px 652px 46px 51px; font-family: Roboto, sans-serif; font-size: 17.200px; line-height: 20px; letter-spacing: 0; color: #1c1c1c; }
.emu-title { background: #fff; color: #000; font: 12px/30px "Open Sans", sans-serif; padding-left: 8px; letter-spacing: -.25px; }
.emu-status { display: flex; align-items: center; justify-content: flex-end; gap: 9px; padding: 2px 9px 0 0; color: #fff; font-weight: 500; font-size: 16px; position: relative; }
.emu-status small { position: absolute; right: 82px; top: 5px; font-size: 8px; line-height: 9px; }
.bar { display: grid; place-items: center; font-weight: 700; font-size: 16.800px; color: #606060; background: linear-gradient(#171717, #040404); }
.head { border-bottom: 1px solid #2d2d2d; }
.emu-body { background: #626262; padding: 34px 16px 0; display: flex; flex-direction: column; }
.p2 { margin-top: 17px; line-height: 20.500px; }
.seg { display: flex; border: 1px solid #4c4c4c; border-radius: 9px; height: 46px; align-self: center; font-weight: 700; font-size: 16.600px; overflow: hidden; background: linear-gradient(#696969, #5c5c5c); color: #151515; }
.seg span { display: flex; align-items: center; justify-content: center; border-left: 1px solid #4f4f4f; }
.seg span:first-child { border-left: 0; }
.g1 { width: 184px; margin-top: 16px; } .g1 span { flex: 1; } .g1 .on { flex: none; width: 101px; background: linear-gradient(#24425a, #355c7b); color: #7a7a7a; }
.g2 { width: 315px; margin-top: 9px; } .g2 span { width: 113px; gap: 13px; justify-content: flex-start; padding-left: 10px; } .g2 span:first-child { width: 100px; }
.g2 span:last-child { flex: 1; }
.g2 i { width: 20px; height: 20px; border-radius: 50%; background: #3b3b3b; }
.prog { height: 16px; border: 1px solid #4c4c4c; border-radius: 8px; background: linear-gradient(#525252, #5a5a5a); margin-top: 17px; width: 1063px; }
.emu-body hr { border: 0; border-top: 1px solid #3a3a3a; border-bottom: 1px solid #6b6b6b; margin-top: 17px; height: 2px; flex: none; }
.ly { margin-top: 18px; } .ly + hr { margin-top: 17px; }
.info p { margin-top: 17.500px; } .info { margin-top: -2px; } .info + hr { margin-top: 18px; }
.emu-nav { display: flex; justify-content: center; align-items: center; gap: 152px; padding-left: 1px; }
.dialog { position: absolute; left: 318px; top: 344px; width: 458px; height: 168px; background: #fff; border-radius: 2px; box-shadow: 0 16px 30px rgba(0,0,0,.4); padding: 22px 26px; display: flex; flex-direction: column; color: #212121; }
.dialog h2 { font-size: 21.400px; line-height: 26px; font-weight: 500; } .dialog p { margin-top: 11px; }
.dialog b { font-size: 15px; font-weight: 500; color: #009688; align-self: flex-end; margin-top: 50px; letter-spacing: -.1px; }
.tools { position: absolute; left: 1352px; top: 138px; width: 60px; height: 516px; background: #f0f0f0; border: 1px solid #000; display: flex; flex-direction: column; align-items: center; }
.tools > svg { width: 23px; height: 23px; margin-bottom: 21px; }
.tc { display: flex; gap: 16px; height: 34px; padding-top: 7px; }

/* Taskbars */
.taskbar { display: flex; position: relative; }
.tb1 { position: absolute; left: 0; top: 1050px; width: 1920px; height: 30px; background: rgba(0,0,4,.86); }
.sys, .app { display: grid; place-items: center; }
.tb1 .sys { width: 36px; } .tb1 .app { width: 37px; } .tb1 .sys:nth-child(3) { margin-right: 1.500px; }
.tb1 .sys, .tb1 .app { height: 30px; flex: none; } .tb1 svg { width: 17px; height: 17px; } .tb1 .sys:nth-child(3) svg { width: 20px; }
.w { color: #fff; }
.app { background: linear-gradient(#76b9ed, #76b9ed) center bottom / 28px 2px no-repeat; }
.multi { background: linear-gradient(90deg, #76b9ed 70%, #5587ad 70%) center bottom / 28px 2px no-repeat; }
.act { background: linear-gradient(#76b9ed, #76b9ed) center bottom / 36px 2px no-repeat, #36373a; }
.tb1 .tray { margin-left: auto; display: flex; align-items: center; gap: 8px; color: #fff; padding-right: 4px; letter-spacing: -.3px; }
.tb1 .tray svg { width: auto; height: auto; } .tray span { margin: -3px 3px 0 9px; } .tray i { width: 1px; height: 30px; background: #777; }
.tb2 { height: 38px; background: #010207; border-top: 1px solid #222; }
.tb2 .sys, .tb2 .app { width: 46px; height: 38px; flex: none; } .tb2 .sys { width: 45px; } .tb2 .sys:nth-child(3) { margin-right: 2px; }
.tb2 svg { width: 21px; height: 21px; } .tb2 .sys:nth-child(3) svg { width: 25px; }
.tb2 .sys:first-child { padding-right: 2px; }
.tb2 .app { background-size: 36px 3px; } .tb2 .act { background-size: 46px 3px, auto; }

/* Browser */
.screen2 { display: grid; grid-template-rows: 31px 45px 936px 38px 30px; background: #000; min-width: 0; }
.tabstrip { background: #fff; border-bottom: 1px solid #aaa; display: flex; padding-left: 4px; height: 31px; }
.tab { display: flex; align-items: center; font-size: 14.700px; letter-spacing: -.43px; color: #777; height: 30px; padding: 2px 9px 0 18px; border: 1px solid #b5b9bf; border-bottom: 0; border-radius: 9px 9px 0 0; background: #dce0e7; white-space: nowrap; }
.tab .fv { margin-right: 8px; } .tab .x { width: 11px; height: 11px; color: #777; margin-left: auto; }
.tab span { -webkit-mask-image: linear-gradient(90deg, #000 85%, transparent); width: 176px; }
.t1 { width: 243px; } .t2 { width: 250px; } .t3 { width: 239px; } .t4 { width: 243px; }
.t3 { padding-left: 10px; }
.cur { background: #f8f8f8; color: #222; height: 31px; padding-left: 14px; } .cur .fv { margin-right: 5px; }
.t4 span { width: auto; -webkit-mask-image: none; } .t4 .fv { margin-right: 6px; } .t4 { padding-left: 8px; }
.newtab { width: 34px; height: 20px; margin: 6px 0 0 5px; background: #dce0e7; border: 1px solid #ccc; border-radius: 3px; transform: skewX(14deg); }
.user { width: 30px; height: 24px; background: #adadad; margin-left: 406px; display: grid; place-items: center; padding-bottom: 3px; }
.ccaps { display: flex; gap: 44px; margin: 9px 0 0 76px; color: #777; } .ccaps svg { width: 13px; height: 13px; }
.toolbar { background: linear-gradient(#f8f8f8, #e6e6e6); border-bottom: 1px solid #999; display: flex; align-items: center; padding: 0 12px; gap: 15px; }
.omni { width: 1478px; height: 33px; background: #fff; border: 1px solid #bbb; border-radius: 3px; display: flex; align-items: center; padding: 0 4px 0 9px; }
.omni p { font-size: 19.500px; line-height: 30px; letter-spacing: -.1px; color: #888; margin: -1px auto 0 8px; white-space: nowrap; } .omni b { color: #1e9a1e; font-weight: 400; } .omni em { font-style: normal; color: #222; }
.toolbar .abp { margin: 0 3px 0 -2px; }
.view { min-width: 0; display: grid; grid-template-columns: 1658px 22px; height: 936px; overflow: hidden; }
.page { background: #fafafa; position: relative; height: 936px; overflow: hidden; font: 13.750px/15px "Liberation Sans", Arial, sans-serif; color: #444; }
.d2l { height: 41px; background: #007a98; color: #e8f4f7; display: flex; align-items: center; padding-left: 244px; position: relative; z-index: 1; box-shadow: 0 1px 2px rgba(0,0,0,.5); padding-top: 2px; }
.h1 { margin: 2px 21px 0 6px; } .h2 { margin: 0 12px 0 16px; } .d2l .s12 { color: #fff; }
.me { margin-left: auto; width: 581px; display: flex; align-items: center; } .me i { width: 1px; height: 16px; background: #d3e8ee; margin: 6px 15px 0; }
.me b { letter-spacing: .1px; margin-right: 4px; }
.av { width: 27px; height: 27px; background: #eee; border: 1px solid #999; display: grid; place-items: center; margin: 0 8px 0 39px; }
article { padding: 0 0 0 243px; margin-top: -1px; white-space: nowrap; } article p { margin-bottom: 13.750px; }
.tight { letter-spacing: -.09px; } .loose { letter-spacing: .06px; } article b { letter-spacing: .06px; }
mark { background: #c8c8c8; color: inherit; }
dl { margin-top: 38px; } dt { padding-left: 2px; color: #666; } dd { margin: 6px 0 25px; letter-spacing: -.1px; }
.actions { position: absolute; left: 230px; top: 876px; width: 1201px; height: 70px; border: 2px solid #ccc; border-radius: 7px; background: rgba(255,255,255,.9); padding: 11px 12px; display: flex; gap: 3px; line-height: 32px; text-align: center; }
.submit { width: 76px; height: 36px; border-radius: 4px; background: linear-gradient(#2b90a9, #00708f); border: 1px solid #006a86; color: #fff; } .cancel { width: 73px; height: 36px; border-radius: 4px; border: 1px solid #ccc; background: linear-gradient(#fff, #eee); color: #333; }
.vsb { background: #f1f1f1; display: flex; flex-direction: column; align-items: center; color: #444; padding: 5px 0; } .vsb i { width: 16px; height: 482px; background: #c1c1c1; margin: 172px 0 auto; } .vsb svg:first-child { transform: rotate(180deg); }
```
